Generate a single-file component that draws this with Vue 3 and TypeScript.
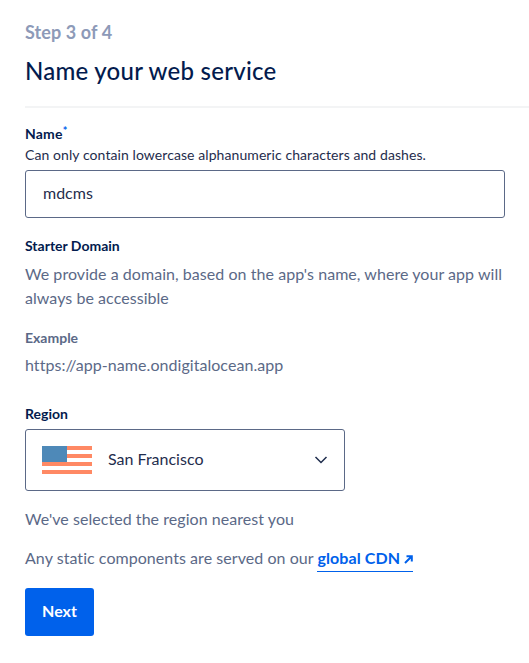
<script setup lang="ts">
const flagStripes = [0, 8, 16, 24]
</script>

<template>
  <main class="page">
    <header class="head">
      <div class="step">Step 3 of 4</div>
      <h1 class="title">Name your web service</h1>
    </header>
    <hr class="rule" />
    <section class="body">
      <label class="label name" for="name">Name<span class="req">*</span></label>
      <p class="hint">Can only contain lowercase alphanumeric characters and dashes.</p>
      <div class="input" id="name"><span class="value">mdcms</span></div>

      <h2 class="label domain">Starter Domain</h2>
      <p class="text desc">We provide a domain, based on the app's name, where your app will always be accessible</p>

      <h2 class="label example">Example</h2>
      <p class="text url">https://app-name.ondigitalocean.app</p>

      <h2 class="label region">Region</h2>
      <div class="select">
        <svg class="flag" width="50" height="28" viewBox="0 0 50 28" aria-hidden="true">
          <rect v-for="y in flagStripes" :key="y" x="0" :y="y" width="50" height="4" fill="#ff8964" />
          <rect x="0" y="0" width="25" height="16" fill="#4e89b8" />
        </svg>
        <span class="city">San Francisco</span>
        <svg class="chev" width="14" height="8" viewBox="0 0 14 8" aria-hidden="true">
          <path d="M1.5 1 L7 6.5 L12.5 1" fill="none" stroke="#1f2d4d" stroke-width="1.5" />
        </svg>
      </div>

      <p class="text nearest">We've selected the region nearest you</p>
      <p class="text cdn">
        Any static components are served on our
        <a class="link" href="#">global CDN<svg class="arrow" width="9" height="9" viewBox="0 0 9 9" aria-hidden="true"><path d="M1 8 L7.5 1.5 M2.5 1.2 H7.8 V6.5" fill="none" stroke="#0061eb" stroke-width="2" /></svg></a>
      </p>
      <button class="next" type="button">Next</button>
    </section>
  </main>
</template>

<style>
html, body { margin: 0; background: #fff; }
</style>

<style scoped>
.page {
  width: 529px;
  height: 663px;
  overflow: hidden;
  background: #fff;
  font-family: Lato, "Open Sans", sans-serif;
  color: #031b4e;
  box-sizing: border-box;
}
.head { padding: 22px 25px 0; }
.step { font-size: 18px; line-height: 20px; font-weight: 700; color: #8d9ab8; letter-spacing: 0.1px; }
.title { margin: 13px 0 0; font-size: 24px; line-height: 32px; font-weight: 500; color: #031b4e; letter-spacing: 0.25px; }
.rule { margin: 19px 0 0 25px; border: 0; height: 2px; background: #f3f4f5; }
.body { padding: 16px 25px 0; display: flex; flex-direction: column; align-items: flex-start; }
.label { display: block; margin: 0; font-size: 14px; line-height: 20px; font-weight: 700; color: #031b4e; }
.name { letter-spacing: 0.2px; }
.req { color: #0061eb; font-size: 11px; position: relative; top: -4px; font-weight: 700; }
.hint { margin: 1px 0 0; font-size: 14px; line-height: 18px; color: #1f2d4d; letter-spacing: 0.08px; }
.input {
  margin-top: 6px;
  width: 480px;
  height: 48px;
  box-sizing: border-box;
  border: 1px solid #5b6987;
  border-radius: 3px;
  padding: 0 17px;
  display: flex;
  align-items: center;
  font-size: 16px;
  color: #1f2d4d;
}
.value { position: relative; top: -2px; }
.domain { margin-top: 18px; }
.text { margin: 0; font-size: 16px; line-height: 24px; color: #5b6987; letter-spacing: 0.05px; }
.desc { margin-top: 6px; width: 480px; }
.example { margin-top: 18px; color: #5b6987; }
.url { margin-top: 5px; }
.region { margin-top: 27px; }
.select {
  margin-top: 5px;
  width: 320px;
  height: 62px;
  box-sizing: border-box;
  border: 1px solid #5b6987;
  border-radius: 3px;
  padding: 0 16px;
  display: flex;
  align-items: center;
}
.flag { flex: none; }
.city { margin-left: 16px; flex: 1; font-size: 16px; color: #1f2d4d; padding-bottom: 3px; }
.chev { flex: none; margin-top: -1px; }
.nearest { margin-top: 16px; }
.cdn { margin-top: 15px; }
.link {
  color: #0061eb;
  font-weight: 700;
  text-decoration: none;
  border-bottom: 1px solid #0061eb;
  padding-bottom: 4px;
  letter-spacing: 0.1px;
}
.arrow { margin-left: 4px; }
.next {
  margin-top: 18px;
  width: 69px;
  height: 48px;
  border: 0;
  border-radius: 3px;
  background: #0061eb;
  color: #fff;
  font: 700 16px Lato, sans-serif;
  padding: 0 0 4px;
}
</style>
